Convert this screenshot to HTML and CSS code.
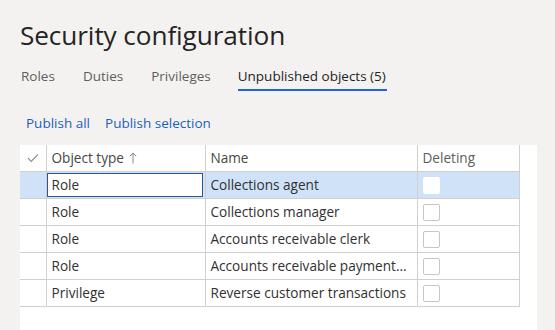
FILE: index.html
```html
<!DOCTYPE html>
<html>
<head>
<meta charset="utf-8">
<link rel="stylesheet" href="styles.css">
</head>
<body>
<div class="page">
  <h1 class="title">Security configuration</h1>
  <nav class="tabs">
    <span class="tab">Roles</span>
    <span class="tab">Duties</span>
    <span class="tab">Privileges</span>
    <span class="tab active">Unpublished objects (5)</span>
  </nav>
  <div class="actions">
    <span class="action">Publish all</span>
    <span class="action">Publish selection</span>
  </div>
  <div class="panel">
    <table class="grid">
      <thead>
        <tr>
          <th class="c-check"><svg width="12" height="10" viewBox="0 0 12 10"><path d="M1 5.2 L4.2 8.4 L11 1.4" fill="none" stroke="#8a8886" stroke-width="1.1"/></svg></th>
          <th class="c-type">Object type <svg class="arrow" width="8" height="12" viewBox="0 0 8 12"><path d="M4 11.5 V1 M0.8 4.2 L4 1 L7.2 4.2" fill="none" stroke="#8a8886" stroke-width="1"/></svg></th>
          <th class="c-name">Name</th>
          <th class="c-del">Deleting</th>
        </tr>
      </thead>
      <tbody>
        <tr class="selected">
          <td class="c-check"></td>
          <td class="c-type"><div class="input">Role</div></td>
          <td class="c-name">Collections agent</td>
          <td class="c-del"><span class="box"></span></td>
        </tr>
        <tr>
          <td class="c-check"></td>
          <td class="c-type">Role</td>
          <td class="c-name">Collections manager</td>
          <td class="c-del"><span class="box"></span></td>
        </tr>
        <tr>
          <td class="c-check"></td>
          <td class="c-type">Role</td>
          <td class="c-name">Accounts receivable clerk</td>
          <td class="c-del"><span class="box"></span></td>
        </tr>
        <tr>
          <td class="c-check"></td>
          <td class="c-type">Role</td>
          <td class="c-name">Accounts receivable payment...</td>
          <td class="c-del"><span class="box"></span></td>
        </tr>
        <tr>
          <td class="c-check"></td>
          <td class="c-type">Privilege</td>
          <td class="c-name">Reverse customer transactions</td>
          <td class="c-del"><span class="box"></span></td>
        </tr>
      </tbody>
    </table>
  </div>
</div>
</body>
</html>
```
FILE: styles.css
```css
html, body {
  margin: 0;
  padding: 0;
  background: #f3f2f1;
  font-family: "Open Sans", "Noto Sans", sans-serif;
  color: #323130;
  height: 100%;
  overflow: hidden;
}
.page {
  padding-left: 20px;
  height: 330px;
  display: flex;
  flex-direction: column;
}
.title {
  margin: 19px 0 0 0;
  font-size: 26.2px;
  font-weight: 400;
  line-height: 32px;
  letter-spacing: -0.1px;
  color: #252423;
}
.tabs {
  display: flex;
  margin-top: 15px;
  font-size: 13.5px;
  height: 25px;
}
.tab {
  color: #605e5c;
  margin-right: 26px;
  line-height: 20px;
  padding: 0 1px 3px 1px;
  height: 25px;
  box-sizing: border-box;
}
.tab.active {
  color: #252423;
  border-bottom: 2px solid #1f62d9;
  padding: 0 1px 3px 0;
}
.actions {
  display: flex;
  gap: 15px;
  margin-top: 23px;
  padding-left: 6px;
  font-size: 13.5px;
  line-height: 18px;
}
.action { color: #1d5fb8; }
.panel {
  margin-top: 13px;
  width: 517px;
  flex: 1;
  background: #ffffff;
}
.grid {
  border-collapse: collapse;
  width: 499px;
  table-layout: fixed;
  font-size: 13.6px;
}
.grid th, .grid td {
  padding: 0 5px;
  text-align: left;
  white-space: nowrap;
  overflow: hidden;
  border-bottom: 1px solid #d2d0ce;
  border-right: 1px solid #d2d0ce;
  height: 27px;
  box-sizing: border-box;
}
.grid th {
  font-weight: 400;
  color: #605e5c;
  height: 26px;
}
.grid th.c-type { color: #484644; }
.grid th.c-name { color: #484644; }
.grid td { color: #323130; }
.grid .c-check { width: 26px; text-align: center; padding: 0; }
.grid .c-type { width: 159px; }
.grid .c-name { width: 212px; }
.grid .c-del { width: 102px; }
.arrow { vertical-align: -1px; margin-left: 2px; }
.selected td { background: #cfe2f7; }
.selected td.c-type { padding: 1px 2px 1px 0; }
.input {
  background: #ffffff;
  border: 1px solid #2b5797;
  height: 24px;
  line-height: 22px;
  padding-left: 4px;
  box-sizing: border-box;
}
.box {
  display: inline-block;
  width: 17px;
  height: 17px;
  box-sizing: border-box;
  border: 1px solid #c8c6c4;
  background: #fff;
  border-radius: 2px;
  vertical-align: middle;
}
.selected .box { border-color: #ffffff; }
```
